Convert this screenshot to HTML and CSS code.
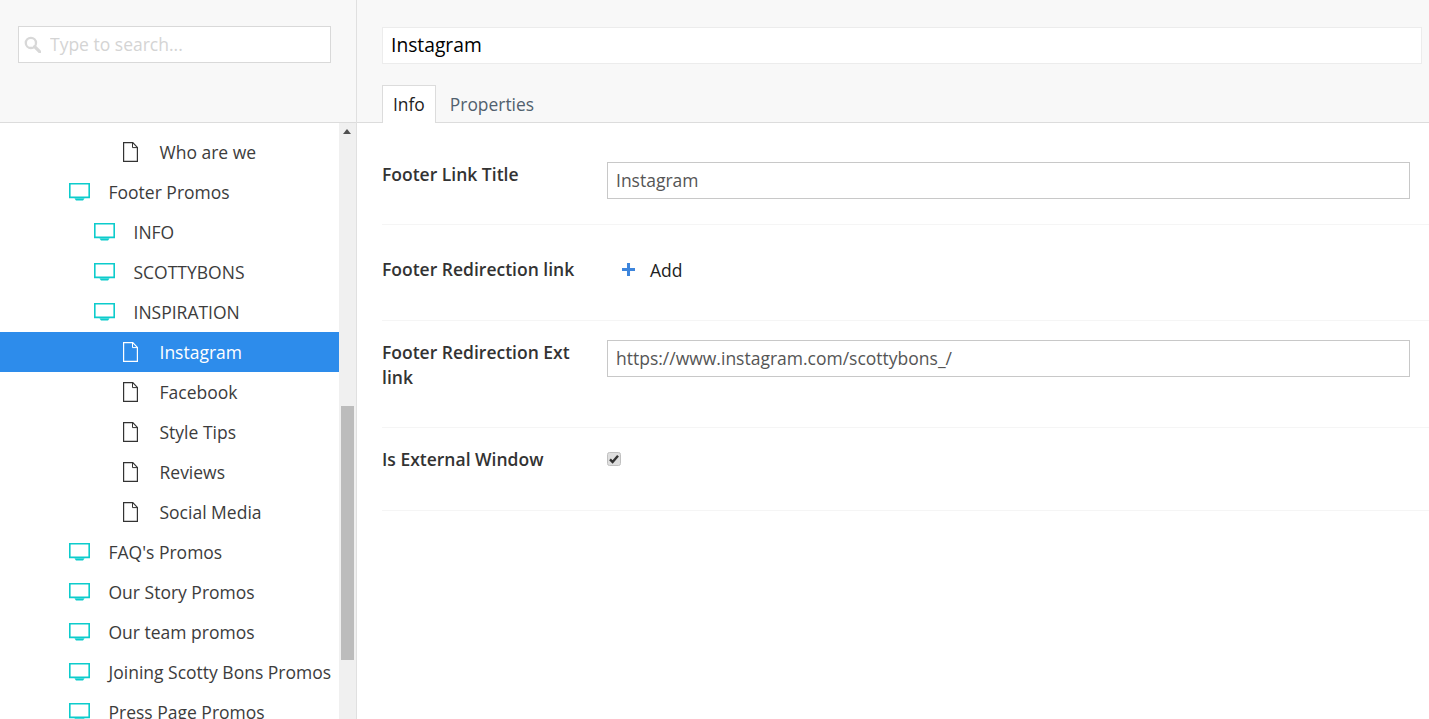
FILE: index.html
```html
<!DOCTYPE html>
<html lang="en">
<head>
<meta charset="utf-8">
<title>Instagram</title>
<link rel="stylesheet" href="styles.css">
</head>
<body>
<svg class="defs" width="0" height="0" aria-hidden="true">
  <symbol id="monitor" viewBox="0 0 21 18">
    <path d="M.8.8h19.4v13.4H.8z" fill="none" stroke="currentColor" stroke-width="1.6"/>
    <path d="M0 14h21v1.2H0zM5.5 15.6h10l-1.5 2H7z" fill="currentColor"/>
  </symbol>
  <symbol id="file" viewBox="0 0 15 20">
    <path d="M.6.6h9.2l4.6 4.8v14H.6z" fill="none" stroke="currentColor" stroke-width="1.2"/>
    <path d="M9.5.6v5h4.9" fill="none" stroke="currentColor" stroke-width="1"/>
  </symbol>
</svg>
<div class="app">
  <aside class="sidebar">
    <div class="side-head">
      <div class="search">
        <svg class="search-icon" viewBox="0 0 16 16" aria-hidden="true">
          <circle cx="6.5" cy="6.5" r="4.8" fill="none" stroke="currentColor" stroke-width="2.2"/>
          <path d="M10 10l5 5" stroke="currentColor" stroke-width="3" stroke-linecap="round"/>
        </svg>
        <input class="search-input" type="text" placeholder="Type to search...">
      </div>
    </div>
    <div class="side-body">
      <ul class="tree">
        <li class="node lvl3"><svg class="ico-file"><use href="#file"/></svg><span>Who are we</span></li>
        <li class="node lvl1"><svg class="ico-mon"><use href="#monitor"/></svg><span>Footer Promos</span></li>
        <li class="node lvl2"><svg class="ico-mon"><use href="#monitor"/></svg><span>INFO</span></li>
        <li class="node lvl2"><svg class="ico-mon"><use href="#monitor"/></svg><span>SCOTTYBONS</span></li>
        <li class="node lvl2"><svg class="ico-mon"><use href="#monitor"/></svg><span>INSPIRATION</span></li>
        <li class="node lvl3 active"><svg class="ico-file"><use href="#file"/></svg><span>Instagram</span></li>
        <li class="node lvl3"><svg class="ico-file"><use href="#file"/></svg><span>Facebook</span></li>
        <li class="node lvl3"><svg class="ico-file"><use href="#file"/></svg><span>Style Tips</span></li>
        <li class="node lvl3"><svg class="ico-file"><use href="#file"/></svg><span>Reviews</span></li>
        <li class="node lvl3"><svg class="ico-file"><use href="#file"/></svg><span>Social Media</span></li>
        <li class="node lvl1"><svg class="ico-mon"><use href="#monitor"/></svg><span>FAQ's Promos</span></li>
        <li class="node lvl1"><svg class="ico-mon"><use href="#monitor"/></svg><span>Our Story Promos</span></li>
        <li class="node lvl1"><svg class="ico-mon"><use href="#monitor"/></svg><span>Our team promos</span></li>
        <li class="node lvl1"><svg class="ico-mon"><use href="#monitor"/></svg><span>Joining Scotty Bons Promos</span></li>
        <li class="node lvl1"><svg class="ico-mon"><use href="#monitor"/></svg><span>Press Page Promos</span></li>
      </ul>
      <div class="scrollbar">
        <div class="scroll-up"></div>
        <div class="scroll-thumb"></div>
      </div>
    </div>
  </aside>
  <main class="content">
    <header class="head">
      <input class="title-input" type="text" value="Instagram">
      <nav class="tabs">
        <a class="tab tab-active">Info</a>
        <a class="tab">Properties</a>
      </nav>
    </header>
    <form class="form">
      <div class="row row-title">
        <label class="label">Footer Link Title</label>
        <input class="field" type="text" value="Instagram">
      </div>
      <div class="row row-add">
        <label class="label">Footer Redirection link</label>
        <div class="add">
          <svg class="plus" viewBox="0 0 12 12" aria-hidden="true"><path d="M4.6 0h2.8v4.6H12v2.8H7.4V12H4.6V7.4H0V4.6h4.6z" fill="currentColor"/></svg>
          <span>Add</span>
        </div>
      </div>
      <div class="row row-ext">
        <label class="label">Footer Redirection Ext link</label>
        <input class="field" type="text" value="https://www.instagram.com/scottybons_/">
      </div>
      <div class="row row-check">
        <label class="label">Is External Window</label>
        <svg class="check" viewBox="0 0 14 14" role="img" aria-label="checked">
          <rect x=".5" y=".5" width="13" height="13" rx="2" fill="#dedede" stroke="#c0c0c0"/>
          <path d="M3 7.4l2.6 2.6L11 3.8" fill="none" stroke="#333" stroke-width="2.4"/>
        </svg>
      </div>
    </form>
  </main>
</div>
</body>
</html>
```
FILE: styles.css
```css
* { box-sizing: border-box; }
html, body { margin: 0; height: 100%; overflow: hidden; }
body { font-family: "Open Sans", "Liberation Sans", sans-serif; font-size: 17.5px; color: #333; background: #fff; }
.defs { display: block; height: 0; }
.app { display: flex; height: 719px; }

.sidebar { width: 357px; flex: none; border-right: 1px solid #e0e0e0; display: flex; flex-direction: column; }
.side-head { height: 123px; flex: none; background: #f8f8f8; border-bottom: 1px solid #dcdcdc; padding: 26px 25px 0 18px; }
.search { height: 37px; display: flex; align-items: center; background: #fff; border: 1px solid #d9d9d9; padding-left: 5px; }
.search-icon { width: 17px; height: 17px; color: #d8d8d8; flex: none; }
.search-input { flex: 1; min-width: 0; height: 33px; border: 0; outline: 0; padding: 0 0 2px 9px; background: transparent; font: 17.5px "Open Sans", sans-serif; color: #333; }
.search-input::placeholder { color: #d4d4d4; opacity: 1; }

.side-body { flex: 1; min-height: 0; display: flex; overflow: hidden; }
.tree { flex: 1; min-width: 0; margin: 0; padding: 9px 0 0; list-style: none; overflow: hidden; }
.node { height: 40px; flex: none; display: flex; align-items: center; white-space: nowrap; color: #3c3c3c; }
.lvl1 { padding-left: 69px; }
.lvl2 { padding-left: 94px; }
.lvl3 { padding-left: 123px; }
.ico-mon { width: 21px; height: 18px; margin-right: 18.5px; color: #0ccccc; flex: none; }
.ico-file { width: 15px; height: 20px; margin-right: 21.5px; color: #333; flex: none; }
.active { background: #2d8ceb; color: #fff; }
.active span { font-weight: 500; }
.active .ico-file { color: #fff; }

.scrollbar { width: 17px; flex: none; background: #f0f0f0; position: relative; }
.scroll-up { position: absolute; left: 4px; top: 6px; width: 0; height: 0; border-left: 4px solid transparent; border-right: 4px solid transparent; border-bottom: 5px solid #505050; }
.scroll-thumb { position: absolute; left: 2px; top: 283px; width: 13px; height: 254px; background: #bcbcbc; }

.content { flex: 1; min-width: 0; display: flex; flex-direction: column; }
.head { height: 123px; flex: none; background: #f8f8f8; border-bottom: 1px solid #dcdcdc; padding: 27px 7px 0 25px; display: flex; flex-direction: column; }
.title-input { height: 37px; width: 100%; flex: none; background: #fff; border: 1px solid #ececec; outline: 0; padding: 0 8px 2px; font: 19.25px "Open Sans", sans-serif; color: #000; }
.tabs { display: flex; margin-top: 21px; height: 38px; }
.tab { display: flex; align-items: center; padding: 0 10px 2px; font-size: 17.4px; color: #51606e; border: 1px solid transparent; border-bottom: 0; }
.tab-active { background: #fff; color: #222; border-color: #dcdcdc; height: 38px; }
.tab + .tab { padding-left: 13px; }

.form { flex: 1; padding-left: 25px; }
.row { display: grid; grid-template-columns: 225px 1fr; border-bottom: 1px solid #f5f5f5; padding-right: 19px; }
.label { font-weight: 600; font-size: 17.5px; line-height: 25px; color: #333; padding-right: 25px; }
.field { height: 37px; width: 100%; border: 1px solid #c8c8c8; outline: 0; padding: 0 8px 2px; font: 17.5px "Open Sans", sans-serif; color: #555; background: #fff; }
.row-title { height: 102px; padding-top: 39px; }
.row-add { height: 96px; padding-top: 32px; }
.add { display: flex; align-items: center; height: 25px; padding-left: 15px; color: #222; gap: 15px; }
.plus { width: 13px; height: 13px; color: #3d85dc; flex: none; }
.row-ext { height: 107px; padding-top: 19px; }
.row-check { height: 83px; padding-top: 19px; }
.check { width: 14px; height: 14px; margin-top: 5px; }
```
